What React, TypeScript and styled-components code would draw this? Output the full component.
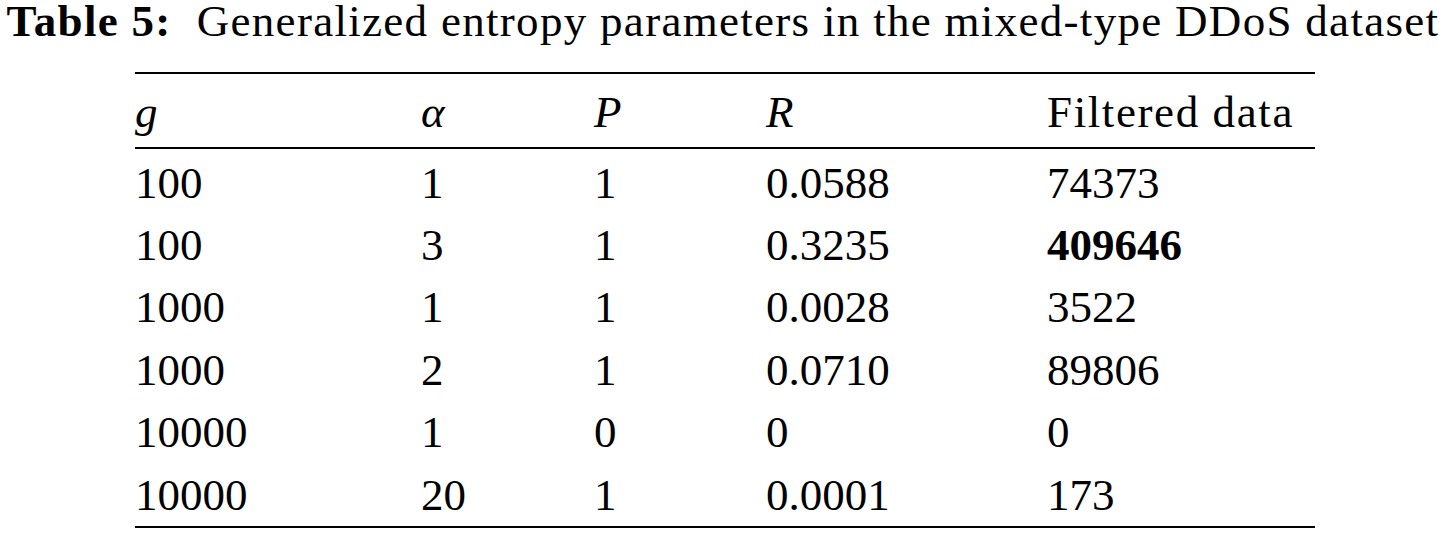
import React from "react";
import styled, { createGlobalStyle } from "styled-components";

const GlobalStyle = createGlobalStyle`
  html, body {
    margin: 0;
    padding: 0;
    background: #ffffff;
  }
  body {
    font-family: "Liberation Serif", "Times New Roman", serif;
    color: #000000;
  }
`;

const Page = styled.div`
  width: 1446px;
  height: 533px;
  display: flex;
  flex-direction: column;
  align-items: center;
  padding-top: 1px;
  box-sizing: border-box;
  overflow: hidden;
`;

const Caption = styled.div`
  font-size: 45px;
  line-height: 40px;
  letter-spacing: 1.3px;
  white-space: pre;
  text-align: center;
`;

const CaptionLabel = styled.span`
  font-weight: bold;
`;

const Table = styled.div`
  margin-top: 31px;
  width: 1180px;
  margin-left: 4px;
  border-top: 2px solid #000;
  border-bottom: 2px solid #000;
  font-size: 45px;
`;

const Row = styled.div<{ $head?: boolean; $first?: boolean }>`
  display: grid;
  grid-template-columns: 286px 173px 172px 281px 1fr;
  line-height: 62.4px;
  padding-top: ${(p) => (p.$head ? "6.6px" : p.$first ? "2.6px" : "0")};
  padding-bottom: ${(p) => (p.$head ? "4px" : "0")};
  border-bottom: ${(p) => (p.$head ? "2px solid #000" : "none")};
`;

const Cell = styled.div<{ $italic?: boolean; $bold?: boolean; $text?: boolean }>`
  font-style: ${(p) => (p.$italic ? "italic" : "normal")};
  font-weight: ${(p) => (p.$bold ? "bold" : "normal")};
  letter-spacing: ${(p) => (p.$text ? "1.6px" : "0")};
  white-space: nowrap;
`;

const rows: { cells: string[]; bold?: number }[] = [
  { cells: ["100", "1", "1", "0.0588", "74373"] },
  { cells: ["100", "3", "1", "0.3235", "409646"], bold: 4 },
  { cells: ["1000", "1", "1", "0.0028", "3522"] },
  { cells: ["1000", "2", "1", "0.0710", "89806"] },
  { cells: ["10000", "1", "0", "0", "0"] },
  { cells: ["10000", "20", "1", "0.0001", "173"] },
];

export default function App() {
  return (
    <>
      <GlobalStyle />
      <Page>
        <Caption>
          <CaptionLabel>Table 5:</CaptionLabel>
          {"  Generalized entropy parameters in the mixed-type DDoS dataset"}
        </Caption>
        <Table>
          <Row $head>
            <Cell $italic>g</Cell>
            <Cell $italic>α</Cell>
            <Cell $italic>P</Cell>
            <Cell $italic>R</Cell>
            <Cell $text>Filtered data</Cell>
          </Row>
          {rows.map((r, i) => (
            <Row key={i} $first={i === 0}>
              {r.cells.map((c, j) => (
                <Cell key={j} $bold={r.bold === j}>
                  {c}
                </Cell>
              ))}
            </Row>
          ))}
        </Table>
      </Page>
    </>
  );
}
